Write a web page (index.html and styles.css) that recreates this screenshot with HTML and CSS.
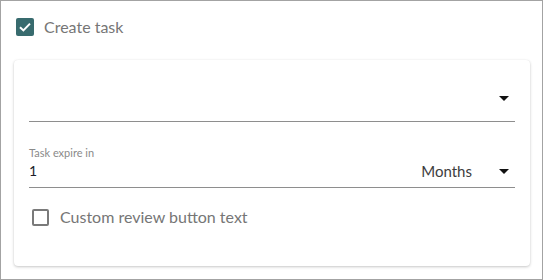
FILE: index.html
```html
<!DOCTYPE html>
<html>
<head>
<meta charset="utf-8">
<link rel="stylesheet" href="styles.css">
</head>
<body>
<div class="frame">
  <label class="check-row top-check">
    <span class="box checked">
      <svg width="18" height="18" viewBox="0 0 18 18"><path d="M4 9.2 L7.4 12.4 L14 5.6" fill="none" stroke="#fff" stroke-width="2"/></svg>
    </span>
    <span class="check-text">Create task</span>
  </label>
  <div class="card">
    <div class="field select-field">
      <span class="value"></span>
      <span class="arrow"></span>
    </div>
    <div class="field expire-field">
      <div class="label">Task expire in</div>
      <div class="row">
        <span class="num">1</span>
        <span class="unit">Months</span>
        <span class="arrow"></span>
      </div>
    </div>
    <label class="check-row custom-check">
      <span class="box empty"></span>
      <span class="check-text">Custom review button text</span>
    </label>
  </div>
</div>
</body>
</html>
```
FILE: styles.css
```css
html, body { margin: 0; padding: 0; background: #fff; }
body { font-family: Lato, "Open Sans", sans-serif; }
.frame {
  width: 543px; height: 280px; box-sizing: border-box;
  border: 1px solid #a3a3a3;
  padding: 17px 12px 0 13px;
}
.check-row { display: flex; align-items: center; }
.top-check { margin-left: 2px; height: 18px; }
.box { width: 18px; height: 18px; box-sizing: border-box; border-radius: 2px; flex: none; display: block; }
.box.checked { background: #386b6e; }
.box svg { display: block; }
.check-text { color: #767676; font-size: 16px; margin-left: 10px; line-height: 18px; }
.card {
  margin-top: 24px;
  width: 516px; height: 206px; box-sizing: border-box;
  border-radius: 4px;
  box-shadow: 0 1px 3px rgba(0,0,0,0.22), 0 0 1px rgba(0,0,0,0.08);
  padding: 15px 15px 0 15px;
}
.field { border-bottom: 1px solid #8e8e8e; display: flex; align-items: center; }
.select-field { height: 46px; justify-content: flex-end; }
.arrow {
  width: 0; height: 0; border-left: 5px solid transparent; border-right: 5px solid transparent;
  border-top: 5px solid #111; margin-right: 6px;
}
.select-field .arrow { margin-top: 1px; }
.expire-field { display: block; margin-top: 24px; }
.label { font-size: 11px; color: #8a8a8a; line-height: 13px; }
.row { display: flex; align-items: center; height: 28px; box-sizing: border-box; padding-bottom: 5px; }
.num { font-size: 14px; color: #1d1d2a; flex: 1; }
.unit { font-size: 15px; color: #3d3d3d; margin-right: 27px; }
.row .arrow { margin-right: 6px; margin-top: 1px; }
.custom-check { margin-top: 20px; margin-left: 3px; }
.box.empty { width: 17px; height: 17px; border: 2px solid #7a7a7a; }
.custom-check .check-text { margin-left: 11px; }
```
